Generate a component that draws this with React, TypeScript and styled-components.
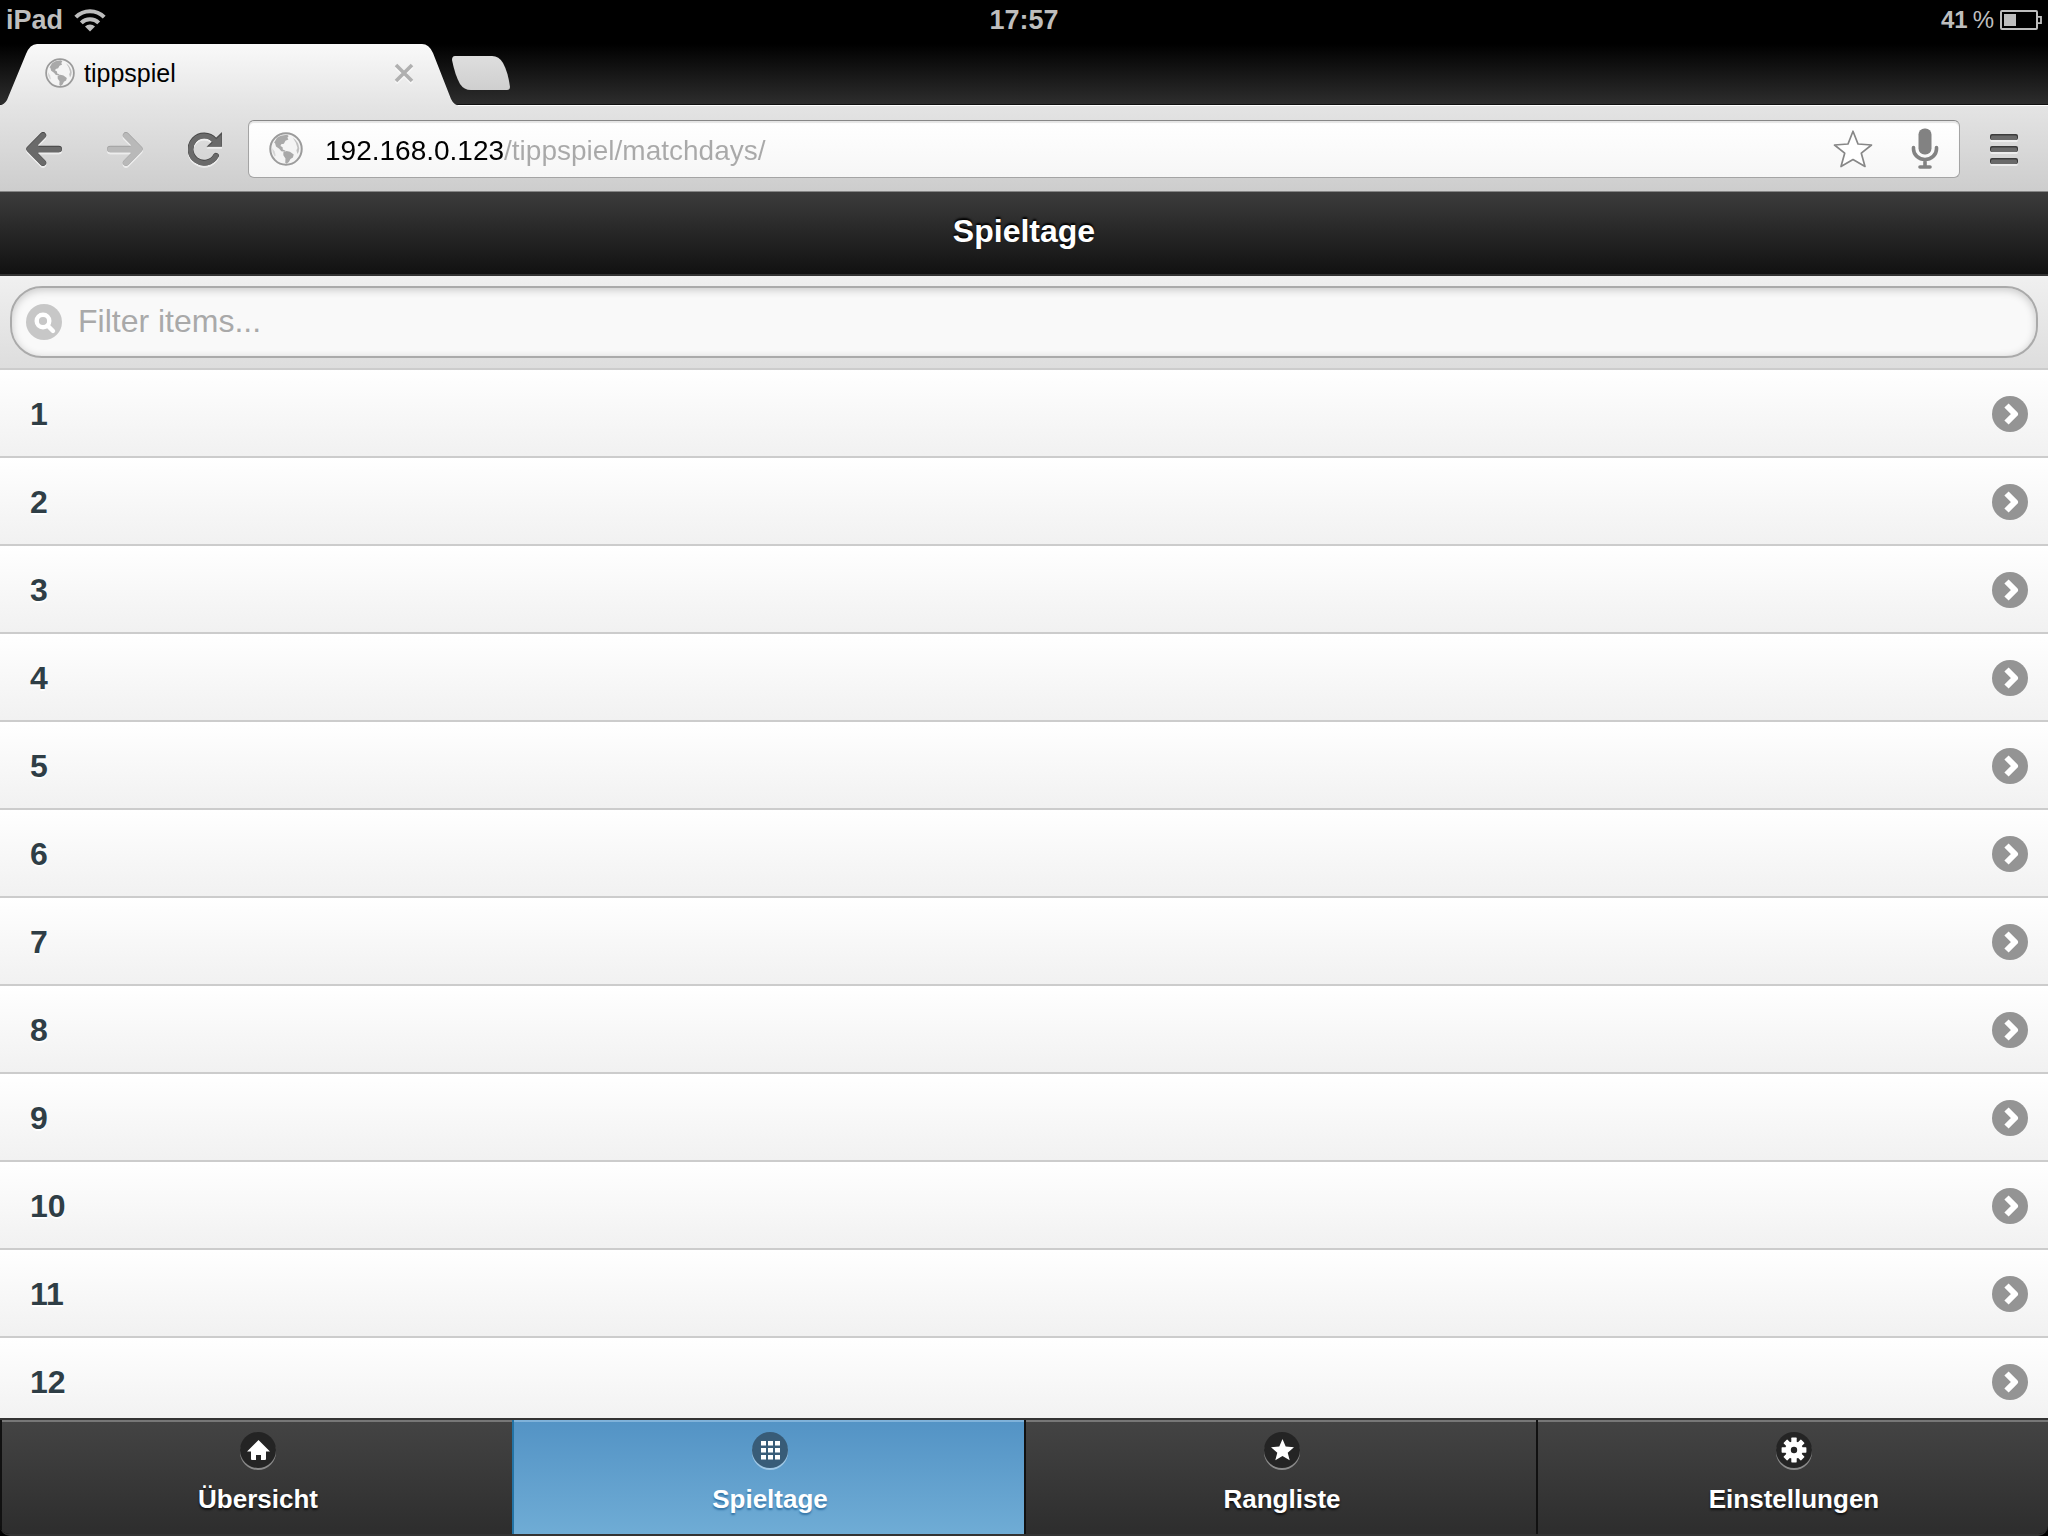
import React, { useState } from "react";
import styled, { createGlobalStyle, css } from "styled-components";

const GlobalStyle = createGlobalStyle`
  *, *::before, *::after { box-sizing: border-box; }
  body {
    margin: 0;
    background: #000;
    font-family: "Liberation Sans", Arial, Helvetica, sans-serif;
  }
`;

const Screen = styled.div`
  display: flex;
  flex-direction: column;
  height: 100vh;
  overflow: hidden;
`;

/* ---------- device status bar ---------- */

const StatusBar = styled.div`
  flex: none;
  display: grid;
  grid-template-columns: 1fr auto 1fr;
  align-items: center;
  height: 40px;
  padding: 0 6px;
  color: #bebebe;
  font-size: 27px;
  font-weight: 700;
  line-height: 36px;
`;

const StatusGroup = styled.div<{ $end?: boolean }>`
  display: flex;
  align-items: center;
  justify-content: ${(p) => (p.$end ? "flex-end" : "flex-start")};
  gap: ${(p) => (p.$end ? "6px" : "11px")};
  svg { display: block; }
`;

const Charge = styled.span`
  display: flex;
  gap: 5px;
  font-size: 24px;
`;

const Percent = styled.span`
  font-weight: 400;
`;

/* ---------- browser chrome ---------- */

const TabStrip = styled.div`
  flex: none;
  display: flex;
  align-items: flex-start;
  height: 65px;
  padding-top: 4px;
  background: linear-gradient(#000 4px, #2d2d2d 64px, #111 64px);
`;

const Tab = styled.div`
  position: relative;
  display: flex;
  align-items: center;
  gap: 9px;
  width: 458px;
  height: 62px;
  padding: 0 44px 4px 45px;
  background: linear-gradient(#f9f9f9, #e4e4e4);
  clip-path: path("M0 62V61Q4 61 7 56L26 10Q30 0 37 0H422Q429 0 433 9L451 55Q454 61 458 61V62Z");
  svg { display: block; }
`;

const TabTitle = styled.span`
  flex: 1;
  color: #000;
  font-size: 25px;
  line-height: 32px;
`;

const PlainButton = styled.button`
  display: block;
  flex: none;
  margin: 0;
  padding: 0;
  border: 0;
  background: none;
  cursor: pointer;
  svg { display: block; }
`;

const EtchedButton = styled(PlainButton)`
  filter: drop-shadow(0 2px 0 rgba(255, 255, 255, 0.55));
`;

const MenuButton = styled(EtchedButton)`
  padding: 0 4px;
`;

const NewTabButton = styled(PlainButton)`
  width: 60px;
  height: 34px;
  margin: 12px 0 0 -7px;
  background: linear-gradient(#dedede, #cfcfcf);
  clip-path: path("M4 0H41Q48 0 52 7Q57 16 59 31Q59 34 56 34H20Q13 34 9 28Q4 19 1 4Q1 0 4 0Z");
`;

const Toolbar = styled.div`
  flex: none;
  display: flex;
  align-items: center;
  gap: 26px;
  padding: 14px 26px 13px;
  border-top: 1px solid #fff;
  border-bottom: 1px solid #858585;
  background: linear-gradient(#e4e4e4, #cdcdcd);
`;

const NavButtons = styled.nav`
  display: flex;
  gap: 45px;
`;

const Omnibox = styled.form`
  flex: 1;
  display: flex;
  align-items: center;
  gap: 22px;
  height: 58px;
  padding: 0 20px;
  border: 1px solid #a4a4a4;
  border-top-color: #878787;
  border-radius: 6px;
  background: linear-gradient(#fff, #f6f6f6);
  box-shadow: inset 0 2px 1px rgba(0, 0, 0, 0.1);
  svg { display: block; }
`;

const AddressInput = styled.input`
  flex: 1;
  min-width: 0;
  height: 44px;
  padding: 4px 0 0;
  border: 0;
  outline: 0;
  font: 28px/40px "Liberation Sans", Arial, sans-serif;
  /* the host part is black and the path part is grey */
  background: linear-gradient(to right, #000 179px, #a9a9a9 179px);
  -webkit-background-clip: text;
  background-clip: text;
  color: transparent;
  caret-color: #000;
`;

const OmniboxActions = styled.div`
  display: flex;
  align-items: center;
  gap: 38px;
`;

/* ---------- web page ---------- */

const PageHeader = styled.header`
  flex: none;
  padding: 18px 20px 22px;
  border-bottom: 2px solid #333;
  background: linear-gradient(#3c3c3c, #111);
  text-align: center;
`;

const PageTitle = styled.h1`
  margin: 0;
  color: #fff;
  font-size: 32px;
  line-height: 42px;
  text-shadow: 0 -2px 2px #000;
`;

const FilterBar = styled.form`
  flex: none;
  padding: 10px;
  border-bottom: 2px solid #ccc;
  background: linear-gradient(#f0f0f0, #ddd);
`;

const FilterField = styled.label`
  display: flex;
  align-items: center;
  gap: 16px;
  height: 72px;
  padding: 0 14px;
  border: 2px solid #aaa;
  border-radius: 32px;
  background: #f9f9f9;
  box-shadow: inset 0 2px 8px rgba(0, 0, 0, 0.2);
  svg { display: block; flex: none; }
`;

const FilterInput = styled.input`
  flex: 1;
  min-width: 0;
  height: 44px;
  padding: 0 0 2px;
  border: 0;
  outline: 0;
  background: none;
  color: #333;
  font: 32px/42px "Liberation Sans", Arial, sans-serif;
  &::placeholder { color: #a9a9a9; opacity: 1; }
`;

const MatchdayList = styled.ul`
  flex: 1;
  min-height: 0;
  margin: 0;
  padding: 0;
  overflow-y: auto;
  scrollbar-width: none;
  background: #f9f9f9;
  list-style: none;
`;

const MatchdayLink = styled.a`
  display: flex;
  align-items: center;
  justify-content: space-between;
  padding: 22px 20px 20px 30px;
  border-bottom: 2px solid #ccc;
  background: linear-gradient(#fff, #f1f1f1);
  color: #2f3e46;
  font-size: 32px;
  font-weight: 700;
  line-height: 44px;
  text-decoration: none;
  text-shadow: 0 2px 0 #fff;
  svg { display: block; }
`;

const FooterBar = styled.nav`
  flex: none;
  display: grid;
  grid-template-columns: repeat(4, 1fr);
  border-top: 2px solid #333;
  border-bottom: 2px solid #333;
  border-radius: 0 0 10px 10px;
  overflow: hidden;
`;

const activeTab = css`
  border-left-color: #2373a5;
  background: linear-gradient(#5393c5, #6facd5);
  box-shadow: inset 0 2px 0 #7fb2da;
  text-shadow: 0 2px 2px #3373a5;
`;

const FooterLink = styled.a<{ $active: boolean }>`
  display: flex;
  flex-direction: column;
  align-items: center;
  gap: 14px;
  padding: 12px 0 18px 2px;
  border-left: 2px solid #111;
  background: linear-gradient(#444, #2d2d2d);
  box-shadow: inset 0 2px 0 #777;
  color: #fff;
  font-size: 26px;
  font-weight: 700;
  line-height: 34px;
  text-decoration: none;
  text-shadow: 0 2px 2px #111;
  ${(p) => p.$active && activeTab}
`;

const IconDisc = styled.span<{ $active: boolean }>`
  width: 36px;
  height: 36px;
  border-radius: 50%;
  background: ${(p) => (p.$active ? "#385c78" : "#242424")};
  box-shadow: 0 2px 0 ${(p) => (p.$active ? "#a0c8e6" : "#8a8a8a")};
  svg { display: block; }
`;

/* ---------- icons ---------- */

const Globe = ({ size }: { size: number }) => (
  <svg width={size} height={size} viewBox="0 0 32 32" aria-hidden="true">
    <circle cx="16" cy="16" r="14.8" fill="#f4f4f4" stroke="#9b9b9b" strokeWidth="1.9" />
    <g fill="#a9a9a9">
      <path d="M7.500 5.500 11 3.500l6-1 1.500 1.200-1.200 1.600 1 1.700-2.800 1.200-1.500 2.800-2.600.6-.6 1.600 2 1.200.2 2 2.600 1.200-.6.900-3.400-.5-2-2.300-3-2-.9-3.200L4.800 10z" />
      <path d="m13.500 19 3-1.200 3.200.9 3.600 2.500-.8 2.800-2.300 1.300-1.500 3-2.200 1.600-1.200-1 .2-4-2-3z" />
      <path d="M22.500 5.500q5.500 4 6 10-.3 3.500-1.800 5.300l-.9-3.600 1-2.200-1.500-5z" opacity=".7" />
      <path d="m3 15 2.300 3.300 1 3.700-1 1-1.800-4z" opacity=".4" />
    </g>
  </svg>
);

const WifiIcon = () => (
  <svg width="32" height="24" viewBox="0 0 32 24" aria-hidden="true">
    <g fill="none" stroke="#bebebe" strokeWidth="4">
      <path d="M1.800 9.200a20 20 0 0 1 28.400 0" />
      <path d="M7.300 14.800a12.300 12.300 0 0 1 17.400 0" />
    </g>
    <path d="M16 23.500 11 18.600a7.200 7.200 0 0 1 10 0z" fill="#bebebe" />
  </svg>
);

const BatteryIcon = () => (
  <svg width="42" height="20" viewBox="0 0 42 20" aria-hidden="true">
    <rect x="1" y="1" width="36" height="18" rx="1" fill="none" stroke="#bebebe" strokeWidth="2" />
    <path d="M38 6.800h3v6.400h-3" fill="none" stroke="#bebebe" strokeWidth="1.800" />
    <rect x="4" y="4" width="12" height="12" fill="#bebebe" />
  </svg>
);

const CloseIcon = () => (
  <svg width="20" height="20" viewBox="0 0 20 20" aria-hidden="true">
    <path d="m2 2 16 16M18 2 2 18" fill="none" stroke="#b0b0b0" strokeWidth="3.600" />
  </svg>
);

const ArrowIcon = ({ forward }: { forward?: boolean }) => (
  <svg width="36" height="34" viewBox="0 0 36 34" aria-hidden="true">
    <g transform={forward ? "matrix(-1 0 0 1 36 0)" : undefined} strokeLinecap="round" strokeLinejoin="round" fill="none">
      <path d="M17 3.200 3.500 17 17 30.800M4 17h28.800" stroke={forward ? "#a2a2a2" : "#454545"} strokeWidth="6.400" />
      <path d="M17 3.800 3.500 17.300 17 30.800M4 17.500h28.800M4 17.300l6-2v4z" stroke={forward ? "#b9b9b9" : "#6a6a6a"} strokeWidth="5.600" />
    </g>
  </svg>
);

const ReloadIcon = () => (
  <svg width="34" height="34" viewBox="0 0 34 34" aria-hidden="true">
    <path d="M26.500 8.200A13.600 13.600 0 1 0 28 23.700" fill="none" stroke="#454545" strokeWidth="5.800" strokeLinecap="round" />
    <path d="M34 0v14.700H18.500z" fill="#505050" />
    <path d="M26.500 9A13.500 13.500 0 1 0 28 24" fill="none" stroke="#6a6a6a" strokeWidth="5" strokeLinecap="round" />
    <path d="M33.500 2.500v11.500H21z" fill="#6a6a6a" />
  </svg>
);

const StarOutline = () => (
  <svg width="40" height="38" viewBox="0 0 40 38" aria-hidden="true">
    <path
      d="m20 1.200 5 12.800 13.500 1-10.200 8.200 3.700 13.300L20 29.500 8 36.500l3.700-13.300L1.500 15l13.500-1z"
      fill="#fff"
      stroke="#878787"
      strokeWidth="1.700"
      strokeLinejoin="round"
    />
  </svg>
);

const MicIcon = () => (
  <svg width="28" height="42" viewBox="0 0 28 42" aria-hidden="true">
    <rect x="7.500" y="0.500" width="13" height="26" rx="6" fill="#828282" />
    <path d="M2.500 19.500V21a11.500 10.500 0 0 0 23 0v-1.500M14 32v6M9 39h10" fill="none" stroke="#828282" strokeWidth="3.600" strokeLinecap="round" />
  </svg>
);

const MenuIcon = () => (
  <svg width="28" height="30" viewBox="0 0 28 30" aria-hidden="true">
    {[0, 12, 24].map((y) => (
      <g key={y}>
        <rect y={y} width="28" height="6" rx="2" fill="#3c3c3c" />
        <rect x="1" y={y + 1.5} width="26" height="4.500" rx="1.500" fill="#6a6a6a" />
      </g>
    ))}
  </svg>
);

const SearchIcon = () => (
  <svg width="36" height="36" viewBox="0 0 36 36" aria-hidden="true">
    <circle cx="18" cy="18" r="18" fill="#c7c7c7" />
    <circle cx="17" cy="17" r="6.300" fill="none" stroke="#fff" strokeWidth="4.400" />
    <path d="m21.500 21.500 5.500 5.500" stroke="#fff" strokeWidth="4.400" strokeLinecap="round" />
  </svg>
);

const ChevronIcon = () => (
  <svg width="36" height="36" viewBox="0 0 36 36" aria-hidden="true">
    <circle cx="18" cy="18" r="18" fill="#949494" />
    <path d="m14.500 9.500 8.500 8.500-8.500 8.500" fill="none" stroke="#fff" strokeWidth="6" strokeLinejoin="round" />
  </svg>
);

const HomeIcon = () => (
  <svg width="36" height="36" viewBox="0 0 36 36" aria-hidden="true">
    <path d="M18.500 8 30 19.500h-4V27q0 1-1 1h-4v-5h-5v5h-4q-1 0-1-1v-7.500H7z" fill="#fff" />
  </svg>
);

const GridIcon = () => (
  <svg width="36" height="36" viewBox="0 0 36 36" aria-hidden="true">
    {[9, 16, 23].map((y) => [9, 16, 23].map((x) => <rect key={`${x}-${y}`} x={x} y={y} width="5" height="4.500" fill="#fff" />))}
  </svg>
);

const StarIcon = () => (
  <svg width="36" height="36" viewBox="0 0 36 36" aria-hidden="true">
    <path d="m18.500 7 3.200 7.600 8.300.7-6.300 5.400 2 7.600-7.200-4.200-7.200 4.200 2-7.600L7 15.300l8.300-.7z" fill="#fff" />
  </svg>
);

const GearIcon = () => (
  <svg width="36" height="36" viewBox="0 0 36 36" aria-hidden="true">
    <g fill="#fff">
      {[0, 45, 90, 135].map((angle) => (
        <rect key={angle} x="15.300" y="5.600" width="5.400" height="24.800" rx="0.600" transform={`rotate(${angle} 18 18)`} />
      ))}
      <circle cx="18" cy="18" r="8.800" />
    </g>
    <circle cx="18" cy="18" r="3.200" fill="#242424" />
  </svg>
);

/* ---------- data ---------- */

const matchdays = Array.from({ length: 12 }, (_, i) => String(i + 1));

const sections = [
  { label: "Übersicht", icon: <HomeIcon /> },
  { label: "Spieltage", icon: <GridIcon /> },
  { label: "Rangliste", icon: <StarIcon /> },
  { label: "Einstellungen", icon: <GearIcon /> },
];

export default function App() {
  const [filter, setFilter] = useState("");
  const [address, setAddress] = useState("192.168.0.123/tippspiel/matchdays/");
  const [active, setActive] = useState("Spieltage");

  return (
    <Screen>
      <GlobalStyle />
      <StatusBar>
        <StatusGroup>
          iPad
          <WifiIcon />
        </StatusGroup>
        <span>17:57</span>
        <StatusGroup $end>
          <Charge>
            41<Percent>%</Percent>
          </Charge>
          <BatteryIcon />
        </StatusGroup>
      </StatusBar>

      <TabStrip>
        <Tab>
          <Globe size={30} />
          <TabTitle>tippspiel</TabTitle>
          <EtchedButton type="button" aria-label="Tab schließen">
            <CloseIcon />
          </EtchedButton>
        </Tab>
        <NewTabButton type="button" aria-label="Neuer Tab" />
      </TabStrip>

      <Toolbar>
        <NavButtons aria-label="Verlauf">
          <EtchedButton type="button" aria-label="Zurück">
            <ArrowIcon />
          </EtchedButton>
          <EtchedButton type="button" aria-label="Vorwärts">
            <ArrowIcon forward />
          </EtchedButton>
          <EtchedButton type="button" aria-label="Neu laden">
            <ReloadIcon />
          </EtchedButton>
        </NavButtons>
        <Omnibox onSubmit={(e) => e.preventDefault()}>
          <Globe size={34} />
          <AddressInput
            type="text"
            aria-label="Adresse"
            value={address}
            onChange={(e) => setAddress(e.target.value)}
          />
          <OmniboxActions>
            <PlainButton type="button" aria-label="Lesezeichen">
              <StarOutline />
            </PlainButton>
            <PlainButton type="button" aria-label="Sprachsuche">
              <MicIcon />
            </PlainButton>
          </OmniboxActions>
        </Omnibox>
        <MenuButton type="button" aria-label="Menü">
          <MenuIcon />
        </MenuButton>
      </Toolbar>

      <PageHeader>
        <PageTitle>Spieltage</PageTitle>
      </PageHeader>
      <FilterBar role="search" onSubmit={(e) => e.preventDefault()}>
        <FilterField>
          <SearchIcon />
          <FilterInput
            type="text"
            aria-label="Filter items..."
            placeholder="Filter items..."
            value={filter}
            onChange={(e) => setFilter(e.target.value)}
          />
        </FilterField>
      </FilterBar>
      <MatchdayList>
        {matchdays
          .filter((day) => day.includes(filter))
          .map((day) => (
            <li key={day}>
              <MatchdayLink href={`#${day}`}>
                {day}
                <ChevronIcon />
              </MatchdayLink>
            </li>
          ))}
      </MatchdayList>
      <FooterBar>
        {sections.map(({ label, icon }) => (
          <FooterLink key={label} href="#" $active={label === active} onClick={() => setActive(label)}>
            <IconDisc $active={label === active}>{icon}</IconDisc>
            {label}
          </FooterLink>
        ))}
      </FooterBar>
    </Screen>
  );
}
